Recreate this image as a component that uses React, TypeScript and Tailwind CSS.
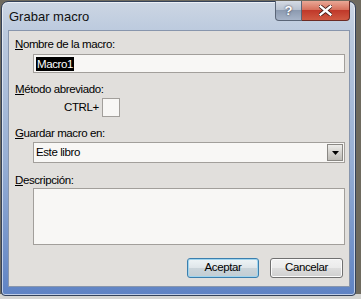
import React from "react";

const font = { fontFamily: '"Liberation Sans", Arial, sans-serif' };

function Label({ children, className = "" }: { children: React.ReactNode; className?: string }) {
  return <div className={"h-[14px] leading-[14px] text-[11.5px] tracking-[-0.4px] text-black " + className}>{children}</div>;
}

export default function App() {
  return (
    <div className="w-[361px] h-[299px] overflow-hidden bg-[#6e6a5e] relative" style={font}>
      <div className="absolute left-0 right-0 bottom-0 h-[5px] bg-[#d4d4d2]" />
      <div className="absolute left-[1px] top-[1px] w-[355px] h-[295px] rounded-t-[7px] rounded-b-[4px] border border-[#34425a] bg-[linear-gradient(180deg,#ccd6e3_0%,#bccade_10%,#96aed4_55%,#5f83c4_100%)] shadow-[inset_0_0_0_1px_rgba(255,255,255,0.6)] flex flex-col">
        <div className="h-[28px] flex items-start pl-[7px] relative">
          <div className="mt-[7px] text-[13px] leading-[16px] text-[#101010]">Grabar macro</div>
          <div className="absolute right-[5px] top-[-1px] flex">
            <div className="w-[27px] h-[20px] rounded-bl-[4px] border border-[#5a6577] border-t-0 bg-[linear-gradient(180deg,#d5dbe4_0%,#b8c2d0_45%,#8c9ab0_50%,#a7b4c8_100%)] flex items-center justify-center text-white font-bold text-[13px] [text-shadow:0_0_2px_#223]">?</div>
            <div className="w-[48px] h-[20px] rounded-br-[4px] border border-[#6b2a24] border-t-0 border-l-0 bg-[linear-gradient(180deg,#e9a896_0%,#d7725e_45%,#c0392a_50%,#d05a42_100%)] flex items-center justify-center">
              <svg width="13" height="11" viewBox="0 0 13 11">
                <path d="M1.5 1.5 L11.5 9.5 M11.5 1.5 L1.5 9.5" stroke="#3a1510" strokeWidth="4" strokeLinecap="square" />
                <path d="M1.5 1.5 L11.5 9.5 M11.5 1.5 L1.5 9.5" stroke="#ffffff" strokeWidth="2.4" strokeLinecap="square" />
              </svg>
            </div>
          </div>
        </div>
        <div className="ml-[6px] w-[342px] h-[257px] bg-[#e1dfdc] border border-[#8896ad] flex flex-col pl-[6px]">
          <Label className="mt-[6px]"><span className="underline">N</span>ombre de la macro:</Label>
          <div className="mt-[3px] ml-[18px] w-[312px] h-[19px] bg-[#f8f7f5] border border-[#a29f9b] flex items-center pl-[2px]">
            <span className="bg-black text-white text-[11.5px] tracking-[-0.4px] leading-[14px] px-[1px]">Macro1</span>
          </div>
          <Label className="mt-[9px]"><span className="underline">M</span>étodo abreviado:</Label>
          <div className="mt-[2px] flex items-center h-[19px]">
            <span className="ml-[49px] text-[11.5px] tracking-[-0.4px]">CTRL+</span>
            <div className="ml-[3px] w-[18px] h-[19px] bg-[#f8f7f5] border border-[#a29f9b]" />
          </div>
          <Label className="mt-[9px]"><span className="underline">G</span>uardar macro en:</Label>
          <div className="mt-[2px] ml-[18px] w-[312px] h-[21px] bg-[#f8f7f5] border border-[#a29f9b] flex items-center pl-[2px] justify-between pr-[1px]">
            <span className="text-[11.5px] tracking-[-0.4px]">Este libro</span>
            <div className="w-[16px] h-[17px] border border-[#8a8884] bg-[linear-gradient(180deg,#eeedea_0%,#d4d2ce_50%,#bebcb7_100%)] flex items-center justify-center">
              <svg width="7" height="4" viewBox="0 0 7 4"><path d="M0 0 H7 L3.5 4 Z" fill="#000" /></svg>
            </div>
          </div>
          <Label className="mt-[10px]"><span className="underline">D</span>escripción:</Label>
          <div className="mt-[1px] ml-[18px] w-[312px] h-[57px] bg-[#f8f7f5] border border-[#a29f9b]" />
          <div className="mt-[13px] flex">
            <div className="ml-[172px] w-[72px] h-[20px] rounded-[3px] border border-[#3b7fae] shadow-[inset_0_0_0_1px_#9fd4ee] bg-[linear-gradient(180deg,#eef4f6_0%,#dfe6ea_48%,#cad4da_52%,#c2cdd3_100%)] flex items-center justify-center text-[11.5px] tracking-[-0.4px]">Aceptar</div>
            <div className="ml-[11px] w-[73px] h-[20px] rounded-[3px] border border-[#707070] shadow-[inset_0_0_0_1px_#fbfbfb] bg-[linear-gradient(180deg,#f2f2f2_0%,#ebebeb_48%,#dddddd_52%,#cfcfcf_100%)] flex items-center justify-center text-[11.5px] tracking-[-0.4px]">Cancelar</div>
          </div>
        </div>
      </div>
    </div>
  );
}
